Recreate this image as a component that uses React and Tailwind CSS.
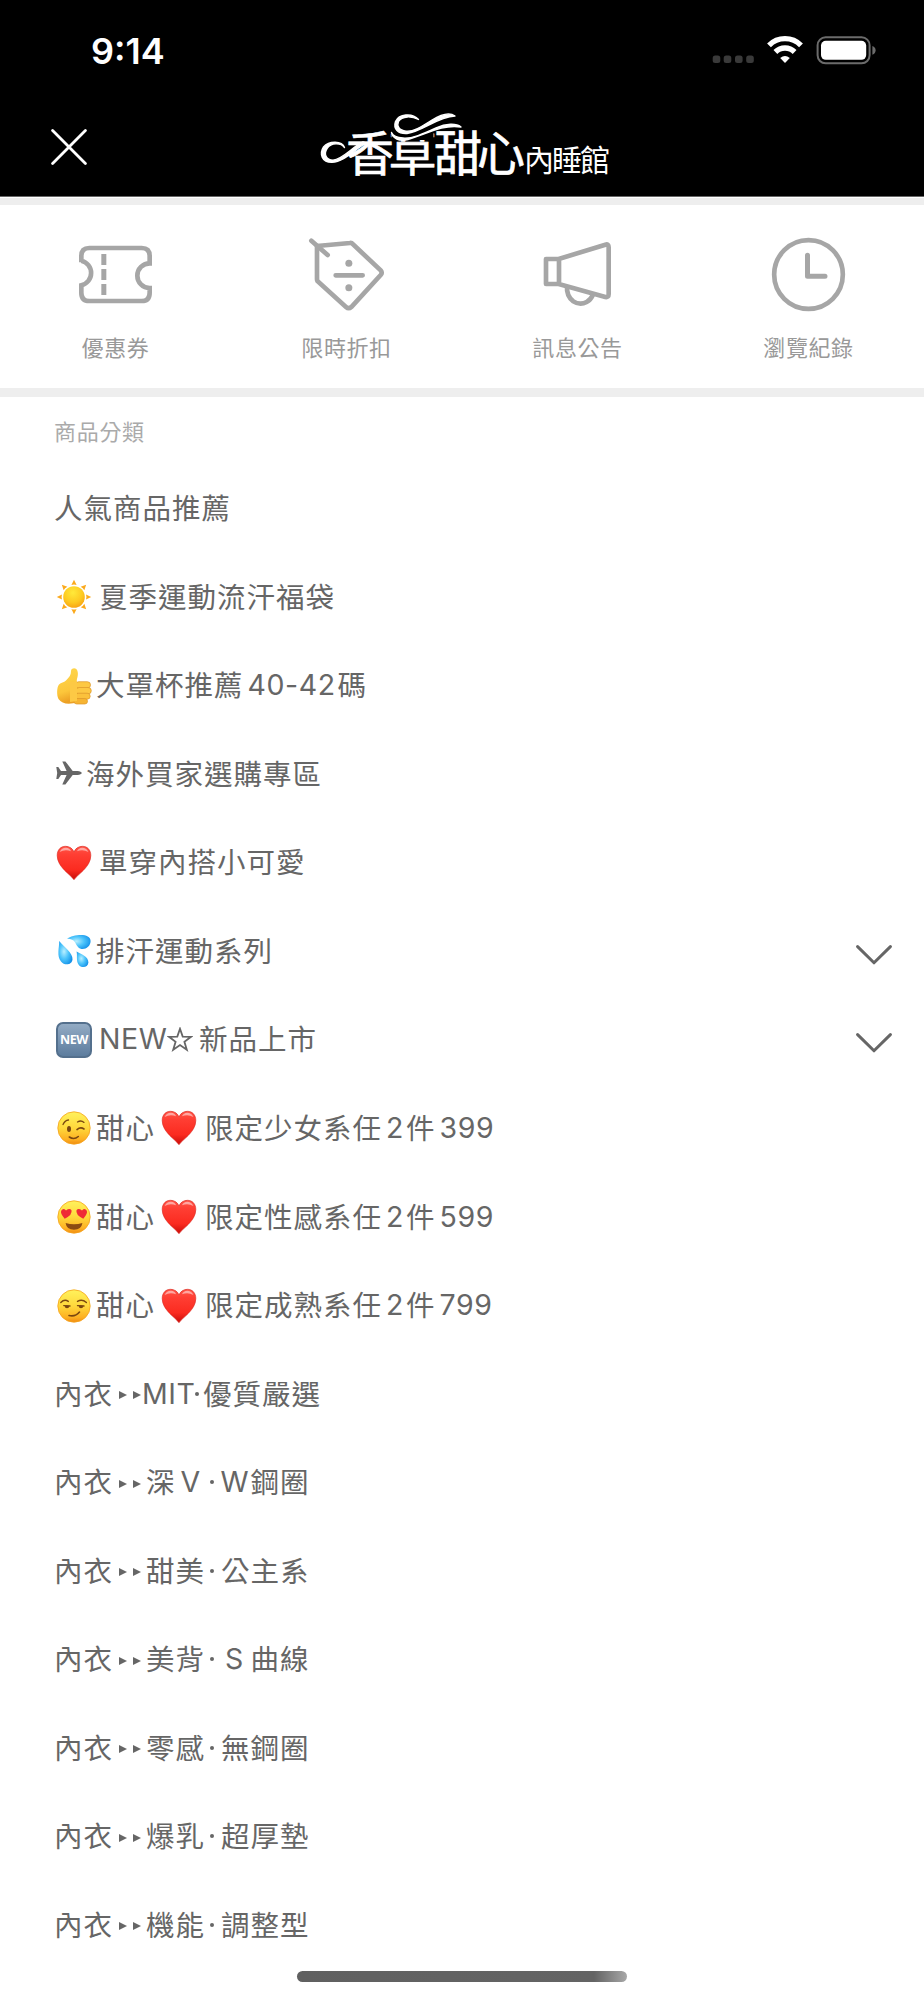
import { useId } from "react";

const SunIcon = () => {
  const id = useId();
  return (
    <svg width="36" height="36" viewBox="0 0 36 36">
      <defs>
        <radialGradient id={id} cx="0.45" cy="0.3" r="0.75">
          <stop offset="0" stopColor="#ffe93a" />
          <stop offset="0.6" stopColor="#fdc921" />
          <stop offset="1" stopColor="#f79e10" />
        </radialGradient>
      </defs>
      {[0, 45, 90, 135, 180, 225, 270, 315].map((deg) => (
        <path
          key={deg}
          d="M18 0.8 L20.6 6 Q18 5 15.4 6 Z"
          fill="#fba91c"
          transform={`rotate(${deg} 18 18)`}
        />
      ))}
      <circle cx="18" cy="18" r="10.8" fill={`url(#${id})`} />
    </svg>
  );
};

const ThumbIcon = () => {
  const id = useId();
  return (
    <svg width="36" height="38" viewBox="0 0 36 38">
      <defs>
        <linearGradient id={id} x1="0" y1="0" x2="0.2" y2="1">
          <stop offset="0" stopColor="#ffd84e" />
          <stop offset="0.7" stopColor="#fcc63b" />
          <stop offset="1" stopColor="#eca024" />
        </linearGradient>
      </defs>
      <path
        d="M15 4 C15 1 20 0 21.3 3.5 C23 8 20.5 12 20.8 14.5 L22 21 L22 35 C13 38 6 37 2.5 32 C0.5 28 0.8 20 3 17.5 C5 15.5 8 15.5 10 13.5 C13.5 10 15 8 15 4 Z"
        fill={`url(#${id})`}
      />
      <rect x="19.5" y="14.7" width="15" height="6.5" rx="3.2" fill="#fdc843" stroke="#dc962b" strokeWidth="0.7" />
      <rect x="20" y="20.5" width="15.3" height="6.4" rx="3.2" fill="#fdc843" stroke="#dc962b" strokeWidth="0.7" />
      <rect x="19.5" y="26.2" width="14.7" height="6" rx="3" fill="#fbc13c" stroke="#dc962b" strokeWidth="0.7" />
      <rect x="18" y="31.5" width="13.5" height="5.5" rx="2.7" fill="#f6b432" stroke="#dc962b" strokeWidth="0.7" />
      <path d="M14 15 L21 14.5 L21 34 L14 35 Z" fill="#fdc945" />
    </svg>
  );
};

const PlaneIcon = () => (
  <svg width="26" height="24" viewBox="0 0 26 24">
    <path
      d="M0.3 6 L2.3 6 L5 10 L10.6 10 L6.3 0.4 L9.4 0.4 L16.7 10 L21.5 10 Q25.3 10.4 25.8 12 Q25.3 13.6 21.5 14 L16.7 14 L9.4 23.6 L6.3 23.6 L10.6 14 L5 14 L2.3 18 L0.3 18 L1.2 12 Z"
      fill="#666"
    />
  </svg>
);

const HeartIcon = () => {
  const id = useId();
  return (
    <svg width="36" height="36" viewBox="0 0 36 36">
      <defs>
        <linearGradient id={id} x1="0" y1="0" x2="0" y2="1">
          <stop offset="0" stopColor="#ff5548" />
          <stop offset="0.25" stopColor="#ff3e33" />
          <stop offset="0.7" stopColor="#fb2b20" />
          <stop offset="1" stopColor="#c80c09" />
        </linearGradient>
      </defs>
      <path
        d="M18 34.7 C14.5 29.5 1.2 22 1.2 10.5 C1.2 4.5 5 1.3 9.6 1.3 C13.5 1.3 16.7 3.5 18 7 C19.3 3.5 22.5 1.3 26.4 1.3 C31 1.3 34.8 4.5 34.8 10.5 C34.8 22 21.5 29.5 18 34.7 Z"
        fill={`url(#${id})`}
        stroke="#d9251c"
        strokeWidth="0.6"
      />
      <path d="M3.6 7 Q6 2.6 10 2.8 Q13.8 3.2 15 6.2 Q9 3.8 3.6 7 Z" fill="#fff" opacity="0.5" />
      <path d="M21 6.2 Q22.5 3 26.2 2.8 Q30.2 2.8 32.4 7 Q27 3.8 21 6.2 Z" fill="#fff" opacity="0.5" />
    </svg>
  );
};

const DropsIcon = () => {
  const id = useId();
  return (
    <svg width="36" height="36" viewBox="0 0 36 36">
      <defs>
        <radialGradient id={id} cx="0.4" cy="0.45" r="0.65">
          <stop offset="0" stopColor="#b9efff" />
          <stop offset="0.5" stopColor="#4cc4fb" />
          <stop offset="1" stopColor="#1390e8" />
        </radialGradient>
      </defs>
      <path d="M11 5.5 C17 1.5 34.5 -1 34.6 8 C34.6 15 26 18.5 22 14 C18.5 10 20 6.5 11 5.5 Z" fill={`url(#${id})`} />
      <path d="M3.2 8 C8 14 17 20 16.5 26.5 C16 32 8.5 33 5 28.5 C0.5 23 3.2 15 3.2 8 Z" fill={`url(#${id})`} />
      <path d="M20.6 18.5 C25 21 32.5 23.5 32.4 29.5 C32 35 25 35.5 22.5 31.5 C20 27.5 21.5 23 20.6 18.5 Z" fill={`url(#${id})`} />
    </svg>
  );
};

const NewIcon = () => (
  <span className="flex h-9 w-9 items-center justify-center rounded-[7px] border-2 border-[#54708d] bg-gradient-to-b from-[#93abc4] to-[#5d7d9e] font-['Open_Sans'] text-[12.5px] leading-none font-bold tracking-[-0.4px] text-white">
    NEW
  </span>
);

const Face = ({ children }) => {
  const id = useId();
  return (
    <svg width="36" height="36" viewBox="0 0 36 36">
      <defs>
        <linearGradient id={id} x1="0" y1="0" x2="0" y2="1">
          <stop offset="0" stopColor="#fff25c" />
          <stop offset="0.5" stopColor="#ffd83c" />
          <stop offset="0.85" stopColor="#fdb022" />
          <stop offset="1" stopColor="#f08c12" />
        </linearGradient>
      </defs>
      <circle cx="18" cy="18" r="16.2" fill={`url(#${id})`} stroke="#f5a31d" strokeWidth="0.8" />
      {children}
    </svg>
  );
};

const WinkFace = () => (
  <Face>
    <g fill="none" stroke="#7a4710" strokeWidth="1.3" strokeLinecap="round">
      <path d="M7 14.5 Q8.8 10.3 12.5 10" />
      <path d="M21.5 12 Q25 9.8 28 12.4" />
      <path d="M21 19.6 Q24.5 16.6 28 19" strokeWidth="1.6" />
      <path d="M13.3 27 Q18 30.3 22.3 26.5" strokeWidth="1.6" />
    </g>
    <ellipse cx="13" cy="19" rx="2" ry="3" fill="#7a4710" />
  </Face>
);

const LoveFace = () => (
  <Face>
    <path d="M9.5 19.5 Q4.8 14 6 11.5 Q8 8.3 10.8 11.2 Q14.5 8.5 16.3 11 Q17.5 15.5 9.5 19.5 Z" fill="#ef2b36" transform="translate(-0.8 0.3)" />
    <path d="M26.5 19.5 Q31.2 14 30 11.5 Q28 8.3 25.2 11.2 Q21.5 8.5 19.7 11 Q18.5 15.5 26.5 19.5 Z" fill="#ef2b36" transform="translate(0.8 0.3)" />
    <path d="M9.6 24 Q18 26.6 26.4 24 Q25.4 30.8 18 30.8 Q10.6 30.8 9.6 24 Z" fill="#8b4a12" />
  </Face>
);

const SmirkFace = () => (
  <Face>
    <g fill="none" stroke="#7a4710" strokeWidth="1.4" strokeLinecap="round">
      <path d="M4.8 14.5 Q8.5 10.8 12.3 13.4" />
      <path d="M21.5 13.4 Q26 10.6 30.4 14.5" />
      <path d="M7.8 17.6 L14 18" />
      <path d="M21.5 17.6 L28 18" />
      <path d="M13 27.5 Q19.5 29 23.5 24" strokeWidth="1.6" />
    </g>
    <ellipse cx="11" cy="18.8" rx="2.2" ry="1.4" fill="#7a4710" />
    <ellipse cx="25" cy="18.8" rx="2.2" ry="1.4" fill="#7a4710" />
  </Face>
);

const StarIcon = () => (
  <svg width="26" height="25" viewBox="0 0 26 25" fill="none" stroke="#666" strokeWidth="1.8">
    <path d="M13 1.8 L15.7 9.6 L24 9.8 L17.4 14.8 L19.8 22.7 L13 18 L6.2 22.7 L8.6 14.8 L2 9.8 L10.3 9.6 Z" />
  </svg>
);

const Arrows = () => (
  <svg width="22" height="8" viewBox="0 0 22 8" className="mt-[5px] ml-[6px] shrink-0" fill="#666">
    <path d="M0 0 L8 4 L0 8 Z M14 0 L22 4 L14 8 Z" />
  </svg>
);

const Logo = () => (
  <svg width="330" height="90" viewBox="0 0 330 90" fill="#fff">
    <text
      x="46 88.5 134 177"
      y="71"
      fontSize="48"
      fontWeight="400"
      stroke="#fff"
      strokeWidth="0.7"
      className="font-['Noto_Sans_CJK_TC',sans-serif]"
    >
      香草甜心
    </text>
    {/* the ribbons stand in for the top of the second character */}
    <rect x="91.5" y="24" width="42" height="16" fill="#000" />
    <g stroke="#fff" strokeWidth="1.4" strokeLinejoin="round">
      <path d="M44.5 47.5 C42 40.5 29 40.5 23.5 47 C19 54 22 62.5 32 62.3 C44 62 54 50 66 43 L63 42 C52 47 43 59.5 33 60.2 C26 60 23.5 54 27 48.5 C31 42.5 41 42.5 44.5 47.5 Z" />
      <path d="M118.5 19.5 C112 12.5 99 14 95.5 21.5 C93 29 98 34 107 33.5 C123 31 137 17 155 16 C150 12.5 141 14.5 132 20 C121 27 113 32 106 31.2 C99 30.5 96.5 26 98.5 21.5 C102 15.5 112 16 118.5 19.5 Z" />
      <path d="M91.5 32.5 C92.5 38.5 99 41.5 108 39.5 C125 35 141 24 161 27 C156 23 146 23.5 136 28 C123 34 112 38.8 103 38 C97 37.5 93 36 91.5 32.5 Z" />
    </g>
    <text x="224" y="70.5" fontSize="30" textLength="86" className="font-['Noto_Sans_CJK_TC',sans-serif]">
      內睡館
    </text>
  </svg>
);

const StatusBar = () => (
  <div className="flex h-[100px] items-center justify-between pr-[48px] pl-[91px]">
    <span className="mt-[2px] font-['Inter'] text-[36px] leading-none font-semibold text-white">9:14</span>
    <svg width="164" height="32" viewBox="0 0 164 32">
      {[0, 11, 22.3, 33.5].map((x) => (
        <rect key={x} x={x + 0.7} y="21.5" width="7.6" height="7.4" rx="2.5" fill="#3a3a3a" />
      ))}
      <g fill="none" stroke="#fff" strokeWidth="5.4">
        <path d="M57 11.3 A22.6 22.6 0 0 1 89 11.3" />
        <path d="M63.4 18 A13.6 13.6 0 0 1 82.6 18" />
      </g>
      <path d="M73 29 L68.2 24 Q73 20 77.8 24 Z" fill="#fff" />
      <rect x="105.6" y="3.3" width="52" height="26" rx="8" fill="none" stroke="#6b6b6b" strokeWidth="2" />
      <rect x="109" y="6.8" width="45.2" height="19" rx="4.8" fill="#fff" />
      <path d="M160.4 12 Q163.6 13.2 163.6 16.3 Q163.6 19.4 160.4 20.8 Z" fill="#6b6b6b" />
    </svg>
  </div>
);

const shortcuts = [
  {
    label: "優惠券",
    viewBox: "108 45 240 240",
    icon: (
      <>
        <path d="M124 127 V108 Q124 84 148 84 H305 Q329 84 329 108 V130 A37 37 0 0 0 329 204 V218 Q329 243 305 243 H148 Q124 243 124 218 V196 A38 38 0 0 0 124 122" />
        <path d="M191.5 102 V225" strokeWidth="15" strokeDasharray="33 12" />
      </>
    ),
  },
  {
    label: "限時折扣",
    viewBox: "801 45 240 240",
    icon: (
      <>
        <path strokeLinecap="round" d="M814 62 L863 105 M887 166 H968" />
        <path d="M831 78 L930 69 Q935 68 938 72 L1022 151 Q1028 158 1022 165 L934 261 Q926 268 918 261 L833 184 Q831 181 831 178 Z" />
        <circle cx="926.5" cy="129.5" r="10.5" fill="#a6a6a6" stroke="none" />
        <circle cx="926.5" cy="203.5" r="10.5" fill="#a6a6a6" stroke="none" />
      </>
    ),
  },
  {
    label: "訊息公告",
    viewBox: "114 45 240 240",
    icon: (
      <>
        <path strokeLinejoin="round" d="M138 117 H176 L316 74 Q326 71 326 82 V222 Q326 233 316 231 L176 192 H138 Z M177 117 V192" />
        <path d="M201 199 Q199 228 220 244 Q240 257 260 246 Q273 239 279 224" />
      </>
    ),
  },
  {
    label: "瀏覽紀錄",
    viewBox: "807 45 240 240",
    icon: (
      <>
        <circle cx="925.5" cy="163.5" r="103" />
        <path strokeLinecap="round" strokeLinejoin="round" strokeWidth="15" d="M922.5 106 V169 H975" />
      </>
    ),
  },
];

const Emoji = ({ children }) => (
  <span className="flex w-[42px] shrink-0 items-center justify-start pt-[3px] pl-[2px]">{children}</span>
);

const Latin = ({ className, children }) => (
  <span className={`pt-[2px] font-['Inter'] tracking-[0.6px] ${className}`}>{children}</span>
);

const Dot = ({ className }) => (
  <span className={`mt-[2px] h-[4px] w-[4px] shrink-0 rounded-full bg-[#666] ${className}`} />
);

const Sweet = ({ face, name, price }) => (
  <>
    <Emoji>{face}</Emoji>
    甜心
    <span className="mr-[8px] ml-[6px] pt-[3px]">
      <HeartIcon />
    </span>
    限定{name}系任
    <Latin className="w-[24px] pl-[4px]">2</Latin>件<Latin className="pl-[4px]">{price}</Latin>
  </>
);

const categories = [
  { body: "人氣商品推薦" },
  {
    body: (
      <>
        <Emoji>
          <SunIcon />
        </Emoji>
        <span className="pl-[3px]">夏季運動流汗福袋</span>
      </>
    ),
  },
  {
    body: (
      <>
        <Emoji>
          <ThumbIcon />
        </Emoji>
        大罩杯推薦<Latin className="w-[94px] pl-[4px]">40-42</Latin>碼
      </>
    ),
  },
  {
    body: (
      <>
        <span className="flex w-[32px] pl-[2px]">
          <PlaneIcon />
        </span>
        海外買家選購專區
      </>
    ),
  },
  {
    body: (
      <>
        <Emoji>
          <HeartIcon />
        </Emoji>
        <span className="pl-[3px]">單穿內搭小可愛</span>
      </>
    ),
  },
  {
    body: (
      <>
        <Emoji>
          <DropsIcon />
        </Emoji>
        排汗運動系列
      </>
    ),
    expandable: true,
  },
  {
    body: (
      <>
        <Emoji>
          <NewIcon />
        </Emoji>
        <Latin className="w-[71px] pl-[3px]">NEW</Latin>
        <span className="w-[32px] pt-[2px]">
          <StarIcon />
        </span>
        新品上市
      </>
    ),
    expandable: true,
  },
  { body: <Sweet face={<WinkFace />} name="少女" price="399" /> },
  { body: <Sweet face={<LoveFace />} name="性感" price="599" /> },
  { body: <Sweet face={<SmirkFace />} name="成熟" price="799" /> },
  {
    body: (
      <>
        內衣
        <Arrows />
        <Latin className="w-[54px] pl-[1px]">MIT</Latin>
        <Dot className="mr-[4px]" />
        優質嚴選
      </>
    ),
  },
  {
    body: (
      <>
        內衣
        <Arrows />
        <span className="pl-[5px]">深</span>
        <Latin className="w-[34px] pl-[5px]">V</Latin>
        <Dot className="mr-[7px]" />
        <Latin className="w-[30px]">W</Latin>
        鋼圈
      </>
    ),
  },
  { lead: "甜美", tail: "公主系" },
  { lead: "美背", latin: "S", tail: "曲線" },
  { lead: "零感", tail: "無鋼圈" },
  { lead: "爆乳", tail: "超厚墊" },
  { lead: "機能", tail: "調整型" },
];

const Bra = ({ lead, latin, tail }) => (
  <>
    內衣
    <Arrows />
    <span className="pl-[5px]">{lead}</span>
    <Dot className="mr-[7px] ml-[5px]" />
    {latin && <Latin className="w-[29.5px] pl-[4px]">{latin}</Latin>}
    {tail}
  </>
);

export default function App() {
  return (
    <div className="relative h-[2000px] w-[924px] overflow-hidden bg-white font-['Noto_Sans_CJK_TC',sans-serif]">
      <header className="h-[197px] border-b border-[#666] bg-black">
        <StatusBar />
        <div className="flex h-[96px] items-start">
          <button className="mt-[29px] ml-[51px]">
            <svg width="36" height="36" viewBox="0 0 36 36" stroke="#fff" strokeWidth="2.8" strokeLinecap="round">
              <path d="M1.6 1.6 L34.4 34.4 M34.4 1.6 L1.6 34.4" />
            </svg>
          </button>
          <div className="ml-[213px]">
            <Logo />
          </div>
        </div>
      </header>

      <nav className="mt-px flex h-[199px] border-t-[7px] border-b-[9px] border-[#eee]">
        {shortcuts.map(({ label, viewBox, icon }) => (
          <a key={label} className="flex w-[231px] flex-col items-center pt-[30px]">
            <svg width="80" height="80" viewBox={viewBox} fill="none" stroke="#a6a6a6" strokeWidth="14">
              {icon}
            </svg>
            <span className="mt-[15px] text-[22px] leading-8 tracking-[0.6px] text-[#999]">{label}</span>
          </a>
        ))}
      </nav>

      <h2 className="flex h-[66px] items-center pl-[54px] text-[22px] tracking-[0.7px] text-[#aaa]">商品分類</h2>
      <ul className="text-[28.5px] leading-10 tracking-[1px] text-[#666]">
        {categories.map((item, i) => (
          <li key={i} className="flex h-[88.54px] items-center justify-between pr-[32px] pl-[54px]">
            <div className="flex items-center whitespace-nowrap">{item.body ?? <Bra {...item} />}</div>
            {item.expandable && (
              <svg width="36" height="20" viewBox="0 0 36 20" fill="none" stroke="#666" strokeWidth="3" strokeLinecap="round" strokeLinejoin="round" className="mt-[10px]">
                <path d="M1.6 1.6 L18 17.8 L34.4 1.6" />
              </svg>
            )}
          </li>
        ))}
      </ul>

      <div className="absolute top-[1971px] left-[297px] h-[11px] w-[330px] rounded-full bg-gradient-to-r from-[#606060] via-[#646464] via-90% to-[#a8a8a8]" />
    </div>
  );
}
